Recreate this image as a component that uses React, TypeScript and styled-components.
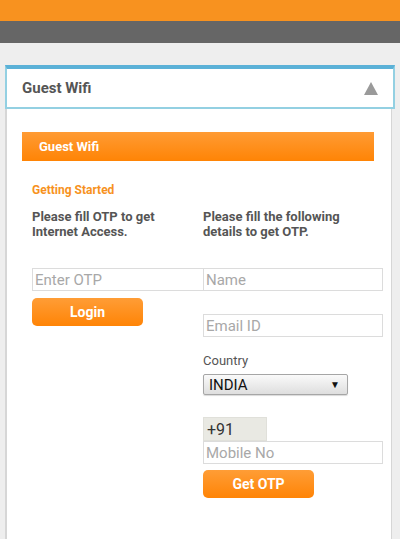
import React from 'react';
import styled, { createGlobalStyle } from 'styled-components';

const GlobalStyle = createGlobalStyle`
  html, body {
    margin: 0;
    padding: 0;
    background: #eeeeee;
    font-family: Roboto, "Liberation Sans", Arial, sans-serif;
  }
  * {
    box-sizing: border-box;
  }
`

const TopBar = styled.div`
  height: 21px;
  background: #f8921f;
`

const NavBar = styled.div`
  height: 22px;
  background: #666666;
`

const Page = styled.div`
  padding: 22px 5px 0 5px;
`

const CardHeader = styled.div`
  display: flex;
  align-items: center;
  justify-content: space-between;
  height: 44px;
  padding: 0 15px 0 15px;
  background: #fff;
  border: 2px solid #93d0e2;
  border-top: 4px solid #5bb1d7;

  > h2 {
    margin: 0;
    font-size: 15px;
    font-weight: 700;
    color: #555;
  }
`

const Panel = styled.div`
  margin: 0 3px 0 0;
  min-height: 440px;
  padding: 23px 17px 0 15px;
  background: #fff;
  border-left: 2px solid #d6d6d6;
  border-right: 1px solid #d6d6d6;
`

const Bar = styled.div`
  height: 29px;
  display: flex;
  align-items: center;
  padding-left: 17px;
  background: linear-gradient(#ff9b34, #ff8405);
  color: #fff;
  font-size: 13px;
  font-weight: 700;
`

const Body = styled.div`
  padding: 22px 0 0 10px;
`

const Title = styled.div`
  font-size: 12px;
  line-height: 14px;
  font-weight: 700;
  color: #f7921e;
`

const Columns = styled.div`
  display: grid;
  grid-template-columns: 171px 180px;
  margin-top: 12px;
`

const Column = styled.div`
  display: flex;
  flex-direction: column;
  align-items: flex-start;
`

const Note = styled.p`
  margin: 0 0 29px;
  font-size: 13px;
  line-height: 15px;
  font-weight: 700;
  color: #555;
`

const Input = styled.input<{ $w?: number }>`
  width: ${p => p.$w || 180}px;
  height: 23px;
  margin: 0;
  padding: 0 2px;
  border: 1px solid #dcdcdc;
  border-radius: 0;
  font-family: Roboto, "Liberation Sans", Arial, sans-serif;
  font-size: 15px;
  color: #333;
  outline: none;

  &::placeholder {
    color: #a8a8a8;
  }
`

const Button = styled.button`
  width: 111px;
  height: 28px;
  margin: 0;
  border: none;
  border-radius: 5px;
  background: linear-gradient(#ff9d36, #ff8406);
  color: #fff;
  font-family: Roboto, "Liberation Sans", Arial, sans-serif;
  font-size: 14px;
  font-weight: 700;
`

const Label = styled.div`
  font-size: 13px;
  color: #555;
  line-height: 15px;
`

const Select = styled.div`
  display: flex;
  align-items: center;
  justify-content: space-between;
  width: 145px;
  height: 21px;
  padding: 0 7px 0 5px;
  border: 1px solid #a6a6a6;
  border-radius: 2px;
  background: linear-gradient(#fafafa, #dedede);
  font-size: 15px;
  color: #111;
  box-shadow: 0 1px 1px rgba(0, 0, 0, 0.15);

  > span {
    font-size: 10px;
  }
`

const Code = styled.div`
  width: 64px;
  height: 24px;
  padding: 0 3px;
  display: flex;
  align-items: center;
  background: #e9e9e3;
  border: 1px solid #e0e0da;
  font-size: 16px;
  color: #333;
`

const Gap = styled.div<{ $h: number }>`
  height: ${p => p.$h}px;
`

function Triangle() {
  return (
    <svg width="14" height="13" viewBox="0 0 14 13">
      <polygon points="7,0 14,13 0,13" fill="#9a9a9a" />
    </svg>
  )
}

export default function App() {
  return (
    <>
      <GlobalStyle />
      <TopBar />
      <NavBar />
      <Page>
        <CardHeader>
          <h2>Guest Wifi</h2>
          <Triangle />
        </CardHeader>
        <Panel>
          <Bar>Guest Wifi</Bar>
          <Body>
            <Title>Getting Started</Title>
            <Columns>
              <Column>
                <Note>Please fill OTP to get<br />Internet Access.</Note>
                <Input $w={172} placeholder="Enter OTP" />
                <Gap $h={7} />
                <Button>Login</Button>
              </Column>
              <Column>
                <Note>Please fill the following<br />details to get OTP.</Note>
                <Input placeholder="Name" />
                <Gap $h={23} />
                <Input placeholder="Email ID" />
                <Gap $h={16} />
                <Label>Country</Label>
                <Gap $h={6} />
                <Select>INDIA<span>▼</span></Select>
                <Gap $h={22} />
                <Code>+91</Code>
                <Input placeholder="Mobile No" />
                <Gap $h={6} />
                <Button>Get OTP</Button>
              </Column>
            </Columns>
          </Body>
        </Panel>
      </Page>
    </>
  )
}
